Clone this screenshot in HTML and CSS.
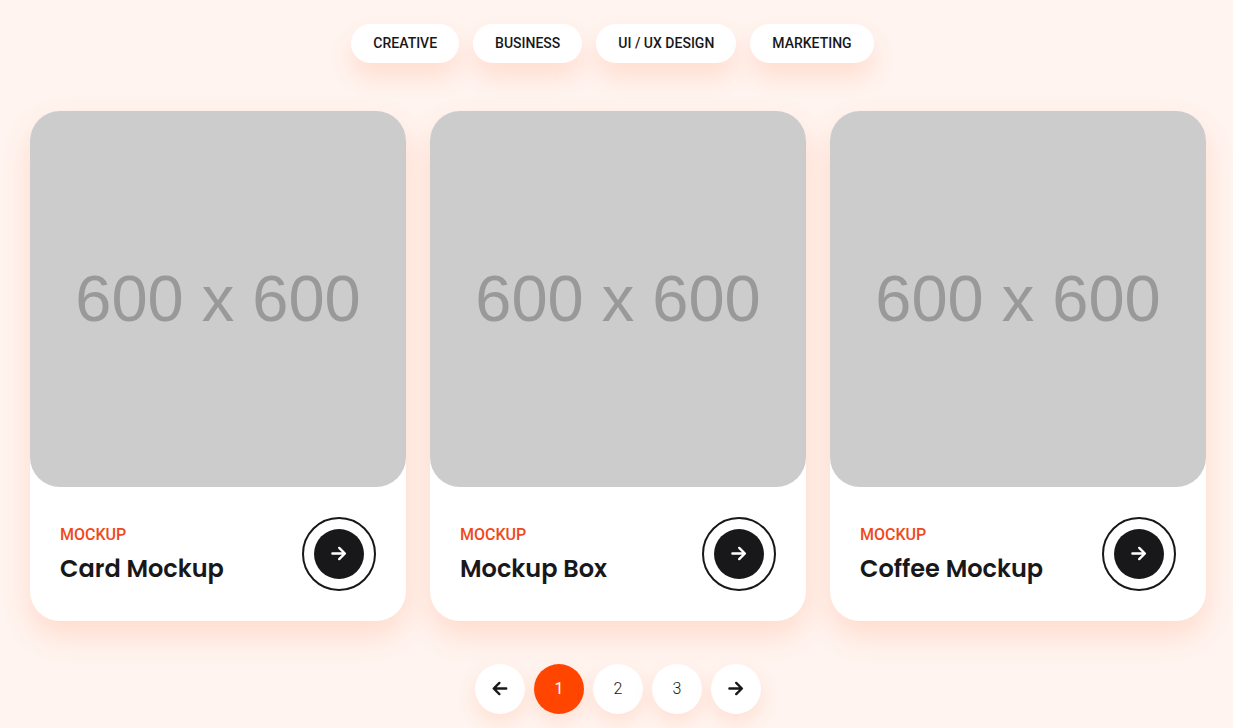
FILE: index.html
```html
<!DOCTYPE html>
<html lang="en">
<head>
<meta charset="utf-8">
<meta name="viewport" content="width=device-width, initial-scale=1">
<title>Portfolio</title>
<link rel="stylesheet" href="styles.css">
</head>
<body>
<svg class="sprite" aria-hidden="true">
  <symbol id="arrow-right" viewBox="0 0 16 16"><path d="M1.4 7.5H13.5M8.2 1.9L13.9 7.5L8.2 13.1"/></symbol>
  <symbol id="arrow-left" viewBox="0 0 16 16"><path d="M14.2 7.5H2.1M7.4 1.9L1.7 7.5L7.4 13.1"/></symbol>
</svg>
<main class="portfolio">
  <div class="filters">
    <button class="filter" type="button">CREATIVE</button>
    <button class="filter" type="button">BUSINESS</button>
    <button class="filter" type="button">UI / UX DESIGN</button>
    <button class="filter" type="button">MARKETING</button>
  </div>
  <div class="cards">
    <article class="card">
      <div class="thumb">600 x 600</div>
      <div class="card-body">
        <div class="card-text">
          <a class="category" href="#">MOCKUP</a>
          <h3 class="title">Card Mockup</h3>
        </div>
        <a class="view" href="#" aria-label="View Card Mockup"><span class="view-dot"><svg class="arrow"><use href="#arrow-right"/></svg></span></a>
      </div>
    </article>
    <article class="card">
      <div class="thumb">600 x 600</div>
      <div class="card-body">
        <div class="card-text">
          <a class="category" href="#">MOCKUP</a>
          <h3 class="title">Mockup Box</h3>
        </div>
        <a class="view" href="#" aria-label="View Mockup Box"><span class="view-dot"><svg class="arrow"><use href="#arrow-right"/></svg></span></a>
      </div>
    </article>
    <article class="card">
      <div class="thumb">600 x 600</div>
      <div class="card-body">
        <div class="card-text">
          <a class="category" href="#">MOCKUP</a>
          <h3 class="title">Coffee Mockup</h3>
        </div>
        <a class="view" href="#" aria-label="View Coffee Mockup"><span class="view-dot"><svg class="arrow"><use href="#arrow-right"/></svg></span></a>
      </div>
    </article>
  </div>
  <nav class="pagination" aria-label="Pages">
    <a class="page" href="#" aria-label="Previous"><svg class="arrow"><use href="#arrow-left"/></svg></a>
    <a class="page page-current" href="#" aria-current="page">1</a>
    <a class="page" href="#">2</a>
    <a class="page" href="#">3</a>
    <a class="page" href="#" aria-label="Next"><svg class="arrow"><use href="#arrow-right"/></svg></a>
  </nav>
</main>
</body>
</html>
```
FILE: styles.css
```css
* {
  box-sizing: border-box;
}

body {
  margin: 0;
  background: #fff4ef;
  color: #18181b;
  font-family: Roboto, sans-serif;
}

a {
  color: inherit;
  text-decoration: none;
}

.sprite {
  display: none;
}

.portfolio {
  padding: 24px 27px 14px 30px;
}

.filters {
  display: flex;
  flex-wrap: wrap;
  justify-content: center;
  gap: 14px;
  padding-right: 11px;
  margin-bottom: 48px;
}

.filter {
  padding: 0 22px;
  border: 0;
  border-radius: 20px;
  background: #fff;
  color: #18181b;
  font: 500 14px/39px Roboto, sans-serif;
  box-shadow: 0 14px 24px rgba(255, 80, 10, 0.13);
}

.cards {
  display: grid;
  grid-template-columns: repeat(3, 1fr);
  gap: 24px;
}

.card {
  border-radius: 30px;
  background: #fff;
  box-shadow: 0 14px 30px rgba(255, 80, 10, 0.15);
}

.thumb {
  display: flex;
  align-items: center;
  justify-content: center;
  aspect-ratio: 1;
  border-radius: 30px;
  background: #ccc;
  color: #999;
  font: 65px/74px "Liberation Sans", Arial, sans-serif;
}

.card-body {
  display: flex;
  align-items: center;
  justify-content: space-between;
  padding: 30px;
}

.category {
  display: block;
  color: #f04a1a;
  font-size: 16px;
  font-weight: 500;
  line-height: 28px;
}

.card-text {
  padding-top: 2px;
}

.title {
  margin: 0;
  font: 600 24px/40px Poppins, Inter, sans-serif;
}

.view {
  flex: none;
  padding: 10px;
  border: 2px solid #18181b;
  border-radius: 50%;
}

.view-dot {
  display: flex;
  align-items: center;
  justify-content: center;
  width: 50px;
  height: 50px;
  border-radius: 50%;
  background: #18181b;
  color: #fff;
}

.arrow {
  width: 16px;
  height: 16px;
  fill: none;
  stroke: currentColor;
  stroke-width: 2.4;
  stroke-linecap: round;
  stroke-linejoin: round;
}

.pagination {
  display: flex;
  justify-content: center;
  gap: 9px;
  margin-top: 43px;
}

.page {
  display: flex;
  align-items: center;
  justify-content: center;
  width: 50px;
  height: 50px;
  border-radius: 50%;
  background: #fff;
  font-size: 16px;
  font-weight: 300;
  line-height: 24px;
  box-shadow: 0 8px 20px rgba(255, 80, 10, 0.12);
}

.page-current {
  background: #ff4500;
  color: #fff;
  font-weight: 400;
}
```
